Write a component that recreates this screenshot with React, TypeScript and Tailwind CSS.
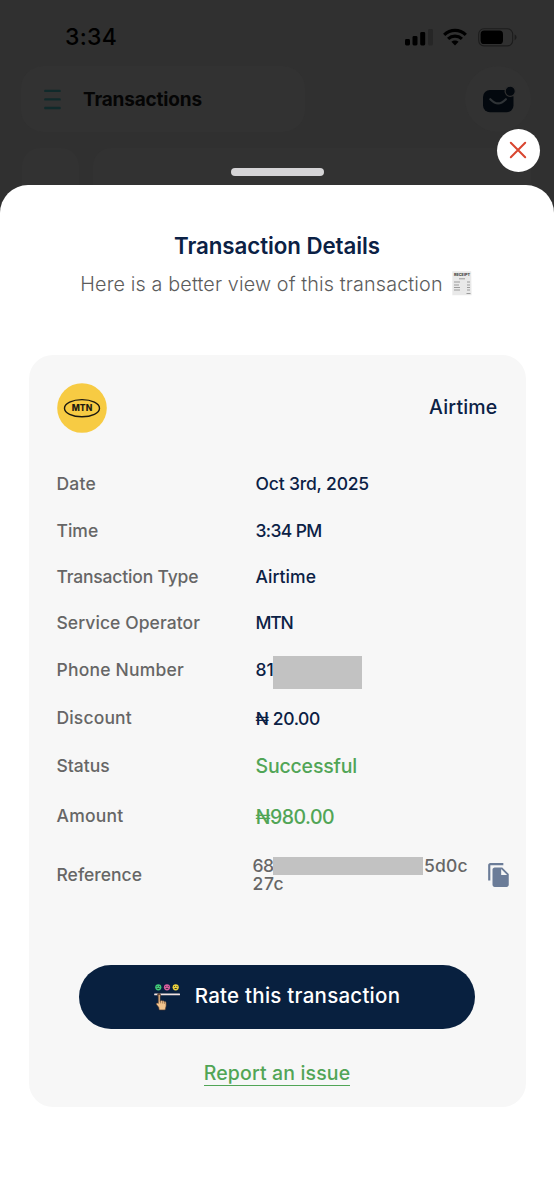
import type { ReactNode } from "react";

type Row = {
  label: string;
  height: string;
  labelClass?: string;
  value: ReactNode;
};

const navy = "text-[#0b2145]";
const green = "text-[#51a556]";

const rows: Row[] = [
  {
    label: "Date",
    height: "h-[46.5px]",
    labelClass: "tracking-[0.2px]",
    value: <p className={`${navy} text-[17.5px] tracking-[-0.18px]`}>Oct 3rd, 2025</p>,
  },
  {
    label: "Time",
    height: "h-[46.5px]",
    labelClass: "pt-px",
    value: <p className={`${navy} pt-px text-[17.5px] tracking-[-0.65px]`}>3:34 PM</p>,
  },
  {
    label: "Transaction Type",
    height: "h-[46.5px]",
    labelClass: "tracking-[-0.18px]",
    value: <p className={`${navy} text-[17.5px] tracking-[0.05px]`}>Airtime</p>,
  },
  {
    label: "Service Operator",
    height: "h-[46px]",
    labelClass: "pt-px tracking-[0.07px]",
    value: <p className={`${navy} pt-px text-[17.5px] tracking-[-1.2px]`}>MTN</p>,
  },
  {
    label: "Phone Number",
    height: "h-[47px]",
    labelClass: "pt-px tracking-[0.2px]",
    value: (
      <div className="flex items-center">
        <p className={`${navy} w-[17px] overflow-hidden pt-px text-[17.5px]`}>81</p>
        <div className="mt-[5px] h-[33px] w-[89px] bg-[#c2c2c2]" />
      </div>
    ),
  },
  {
    label: "Discount",
    height: "h-[49px]",
    labelClass: "pt-px tracking-[0.15px]",
    value: <p className={`${navy} mt-[3px] text-[17.5px] tracking-[-0.38px]`}>₦ 20.00</p>,
  },
  {
    label: "Status",
    height: "h-[48px]",
    value: <p className={`${green} pt-[2px] text-[19.5px] tracking-[-0.18px]`}>Successful</p>,
  },
  {
    label: "Amount",
    height: "h-[52px]",
    labelClass: "tracking-[0.25px]",
    value: <p className={`${green} mt-[4px] text-[19.5px] tracking-[-0.5px]`}>₦980.00</p>,
  },
];

function StatusBar() {
  return (
    <div className="flex h-[66px] items-center justify-between pt-[8px] pr-[37px] pl-[65px]">
      <p className="text-[23px] leading-none font-medium tracking-[0.3px]">3:34</p>
      <div className="flex items-center">
        <svg width="28" height="18" viewBox="0 0 28 18">
          <rect x="0" y="11" width="5" height="6.5" rx="1.4" />
          <rect x="7.5" y="8" width="5" height="9.5" rx="1.4" />
          <rect x="15.2" y="4" width="5" height="13.5" rx="1.4" />
          <rect x="23" y="1" width="5" height="16.5" rx="1.4" fill="#262626" />
        </svg>
        <svg className="ml-[10px]" width="24" height="18" viewBox="0 0 24 18" fill="none" stroke="#000" strokeWidth="3.2">
          <path d="M1.2 6.8C7.3 1 16.7 1 22.8 6.8" />
          <path d="M5.1 10.9c3.9-3.6 9.9-3.6 13.8 0" />
          <path d="M8.4 13.8c2-1.9 5.2-1.9 7.2 0L12 17.6z" fill="#000" stroke="none" />
        </svg>
        <svg className="ml-[11px]" width="39" height="19" viewBox="0 0 39 19">
          <rect x=".7" y=".7" width="34" height="17.2" rx="5.4" fill="none" stroke="#1c1c1c" strokeWidth="1.1" />
          <rect x="2.6" y="2.6" width="22.4" height="13.4" rx="3.6" />
          <path d="M36.6 6.4c2.6 1.2 2.6 4.6 0 5.8z" fill="#1c1c1c" />
        </svg>
      </div>
    </div>
  );
}

function Header() {
  return (
    <div className="flex h-[66px] items-center justify-between pr-[23px] pl-[21px]">
      <div className="flex h-[66px] w-[284px] items-center rounded-[22px] bg-[#323232] pl-[23px]">
        <svg width="17" height="21" viewBox="0 0 17 21" fill="none" stroke="#102a2b" strokeWidth="2.4" strokeLinecap="round">
          <path d="M1.3 1.9h14.3M1.3 10.4h14.3M1.3 19h14.3" />
        </svg>
        <p className="mt-[3px] ml-[22px] text-[19px] font-bold tracking-[-0.18px] text-[#050505]">Transactions</p>
      </div>
      <div className="flex h-[66px] w-[66px] items-center justify-center rounded-full bg-[#323232]">
        <svg className="mt-px ml-[2px]" width="34" height="27" viewBox="0 0 34 27">
          <rect x="1" y="4" width="30.5" height="22.2" rx="7" fill="#03080e" />
          <path d="M8.3 13.2c5.8 5.6 9.8 5.6 15.6 0" fill="none" stroke="#303437" strokeWidth="2.2" strokeLinecap="round" />
          <circle cx="28.2" cy="5.2" r="5.1" fill="#03080e" stroke="#323232" strokeWidth="1.2" />
        </svg>
      </div>
    </div>
  );
}

function ReceiptIcon() {
  return (
    <svg width="20" height="25" viewBox="0 0 20 25">
      <path d="M.3.3h18.9l.4 24H.3z" fill="#e9e9e9" />
      <text x="10" y="5.2" fontSize="3.8" fontWeight="800" textAnchor="middle" fill="#444">
        RECEIPT
      </text>
      <path d="M7 7.8h6M2 11h6M15 11h3M2 14h5M15 14h3M2 16.5h6M15 16.5h3M2 19h6M15 19h3M14.5 22.5h4" stroke="#9b9b9b" strokeWidth="1" />
    </svg>
  );
}

function MtnLogo() {
  return (
    <svg width="50" height="50" viewBox="0 0 50 50">
      <circle cx="25" cy="25" r="24.8" fill="#f7cb43" />
      <ellipse cx="25" cy="25.2" rx="17.5" ry="8.6" fill="none" stroke="#1d1a10" strokeWidth="1.4" />
      <text x="25" y="28.2" fontSize="8.6" fontWeight="800" textAnchor="middle" fill="#1d1a10">
        MTN
      </text>
    </svg>
  );
}

function Face({ x, color }: { x: number; color: string }) {
  return (
    <g>
      <circle cx={x} cy="4.3" r="3.1" fill={color} />
      <circle cx={x - 1.2} cy="3.5" r=".5" fill="#26322f" />
      <circle cx={x + 1.2} cy="3.5" r=".5" fill="#26322f" />
      <path d={`M${x - 1.6} 5c.7 1.4 2.5 1.4 3.2 0z`} fill="#26322f" />
    </g>
  );
}

function RateIcon() {
  return (
    <svg width="27" height="28" viewBox="0 0 27 28">
      <Face x={4.3} color="#3fc878" />
      <Face x={13} color="#d65c9f" />
      <Face x={21.7} color="#edd33c" />
      <rect x=".2" y="10.4" width="25.8" height="1.9" rx=".5" fill="#f3e4e2" />
      <circle cx="5" cy="12" r="1.9" fill="#563f35" />
      <path
        d="M4.3 12.2c0-1.1 1.8-1.1 1.8 0v6.2l.6-.7c.8-.6 1.6-.3 1.8.4.8-.5 1.6-.2 1.8.6.9-.4 1.8.1 1.8 1.2V23l-1 3.9H5.2l-.5-2.6-2.2-2.7c-.6-1.1.2-2.1 1.8-1.2z"
        fill="#f2c38c"
        stroke="#5a4030"
        strokeWidth=".6"
      />
      <path d="M6.6 18v2.3M8.6 18.3v2.2M10.4 19v1.9" stroke="#76533b" strokeWidth=".6" />
    </svg>
  );
}

function App() {
  return (
    <div className="relative h-[1200px] w-[554px] overflow-hidden bg-[#303030] font-['Inter',sans-serif]">
      <div className="h-[185px] overflow-hidden">
        <StatusBar />
        <Header />
        <div className="mt-[16px] flex gap-[14px] pl-[22px]">
          <div className="h-[66px] w-[57px] rounded-[18px] bg-[#323232]" />
          <div className="h-[66px] w-[438px] rounded-[18px] bg-[#323232]" />
        </div>
      </div>

      {/* drag handle and close button float over the backdrop */}
      <div className="absolute top-[168px] left-[231px] h-[8px] w-[93px] rounded-full bg-[#d5d4d6]" />
      <button className="absolute top-[128.5px] left-[497px] flex h-[43px] w-[43px] items-center justify-center rounded-full bg-white">
        <svg className="mr-[2px]" width="18" height="18" viewBox="0 0 18 18" stroke="#d9452f" strokeWidth="2" strokeLinecap="round">
          <path d="M1.8 1.8l14.4 14.4M16.2 1.8L1.8 16.2" />
        </svg>
      </button>

      <div className="flex h-[1015px] flex-col items-center rounded-t-[28px] bg-white pt-[47px]">
        <h1 className="text-[22.3px] leading-[28px] font-semibold tracking-[-0.06px] text-[#0b2145]">Transaction Details</h1>
        <div className="mt-[8px] flex h-[30px] items-center gap-[9px] pr-[2px]">
          <p className="pt-[3px] text-[19.8px] font-light tracking-[0.12px] text-[#5c5c5c]">Here is a better view of this transaction</p>
          <ReceiptIcon />
        </div>

        <div className="mt-[57px] h-[752px] w-[497px] rounded-[24px] bg-[#f7f7f7] pt-[28px]">
          <div className="flex items-center justify-between px-[28px]">
            <MtnLogo />
            <p className="text-[19.5px] font-medium tracking-[0.2px] text-[#0b2145]">Airtime</p>
          </div>

          <div className="mt-[27.5px] pl-[28px] font-medium whitespace-nowrap">
            {rows.map((row) => (
              <div key={row.label} className={`${row.height} flex items-center`}>
                <p className={`w-[199px] text-[17.5px] text-[#666666] ${row.labelClass ?? ""}`}>{row.label}</p>
                {row.value}
              </div>
            ))}

            <div className="flex h-[66px] items-center text-[17.5px] text-[#666666]">
              <p className="w-[196px]">Reference</p>
              <div className="w-[218px] leading-[18.5px]">
                <div className="flex items-center">
                  <p className="w-[20.5px] tracking-[-0.5px]">68</p>
                  <div className="h-[18px] w-[150px] bg-[#c2c2c2]" />
                  <p className="ml-[1px] tracking-[0.15px]">5d0c</p>
                </div>
                <p className="tracking-[0.6px]">27c</p>
              </div>
              <svg className="ml-[15px]" width="26" height="26" viewBox="0 0 24 24" fill="#6b7c98">
                <path d="M16 1H4c-1.1 0-2 .9-2 2v14h2V3h12V1zm-1 4l6 6v10c0 1.1-.9 2-2 2H7.99C6.89 23 6 22.1 6 21l.01-14c0-1.1.89-2 1.99-2h7zm-1 7h5.5L14 6.5V12z" />
              </svg>
            </div>
          </div>

          <div className="mt-[57px] flex flex-col items-center">
            <button className="flex h-[64px] w-[396px] items-center justify-center rounded-full bg-[#08203f] text-white">
              <RateIcon />
              <span className="mb-[2px] ml-[14px] text-[20.5px] font-medium tracking-[0.25px]">Rate this transaction</span>
            </button>
            <a className="mt-[32px] border-b-[1.5px] border-[#51a556] text-[19.5px] leading-[24px] font-medium tracking-[0.14px] text-[#51a556]">
              Report an issue
            </a>
          </div>
        </div>
      </div>
    </div>
  );
}

export default App;
